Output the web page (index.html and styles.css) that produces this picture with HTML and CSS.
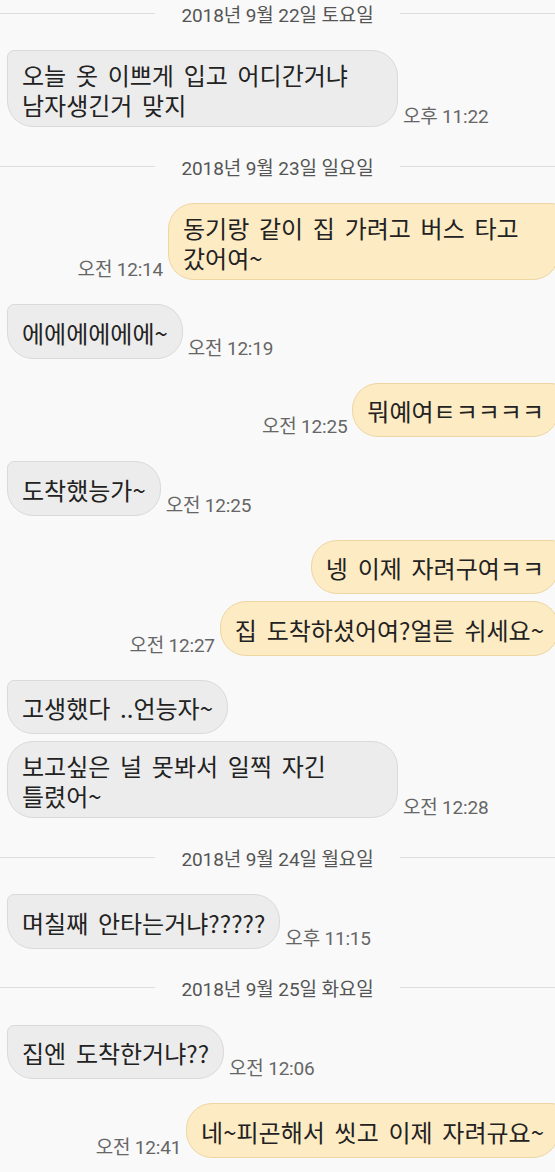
FILE: index.html
```html
<!DOCTYPE html>
<html lang="ko">
  <head>
    <meta charset="UTF-8" />
    <meta name="viewport" content="width=device-width, initial-scale=1.0" />
    <title>메시지</title>
    <link rel="stylesheet" href="styles.css">
  </head>
  <body>
    <div class="chat">
      <div class="day"><span>2018년 9월 22일 토요일</span></div>

      <div class="row in">
        <div class="bubble">오늘 옷 이쁘게 입고 어디간거냐 남자생긴거 맞지</div>
        <span class="time">오후 11:22</span>
      </div>

      <div class="day"><span>2018년 9월 23일 일요일</span></div>

      <div class="row out">
        <span class="time">오전 12:14</span>
        <div class="bubble">동기랑 같이 집 가려고 버스 타고 갔어여~</div>
      </div>

      <div class="row in">
        <div class="bubble">에에에에에에~</div>
        <span class="time">오전 12:19</span>
      </div>

      <div class="row out">
        <span class="time">오전 12:25</span>
        <div class="bubble">뭐예여ㅌㅋㅋㅋㅋ</div>
      </div>

      <div class="row in">
        <div class="bubble">도착했능가~</div>
        <span class="time">오전 12:25</span>
      </div>

      <div class="row out">
        <div class="bubble">넹 이제 자려구여ㅋㅋ</div>
      </div>
      <div class="row out cont">
        <span class="time">오전 12:27</span>
        <div class="bubble">집 도착하셨어여?얼른 쉬세요~</div>
      </div>

      <div class="row in">
        <div class="bubble">고생했다 ..언능자~</div>
      </div>
      <div class="row in cont">
        <div class="bubble">보고싶은 널 못봐서 일찍 자긴 틀렸어~</div>
        <span class="time">오전 12:28</span>
      </div>

      <div class="day"><span>2018년 9월 24일 월요일</span></div>

      <div class="row in">
        <div class="bubble">며칠째 안타는거냐?????</div>
        <span class="time">오후 11:15</span>
      </div>

      <div class="day"><span>2018년 9월 25일 화요일</span></div>

      <div class="row in">
        <div class="bubble">집엔 도착한거냐??</div>
        <span class="time">오전 12:06</span>
      </div>

      <div class="row out">
        <span class="time">오전 12:41</span>
        <div class="bubble">네~피곤해서 씻고 이제 자려규요~</div>
      </div>
    </div>
  </body>
</html>
```

FILE: styles.css
```css
body {
  margin: 0;
  padding: 0;
  background: #f9f9f9;
  font-family: "Noto Sans CJK KR", "Noto Sans", sans-serif;
  color: #222;
  overflow: hidden;
}

.chat {
  display: flex;
  flex-direction: column;
  gap: 24px;
  padding: 0 0 0 7px;
}

/* date separator */
.day {
  height: 26px;
  margin: 2px 0 0 -7px;
  display: flex;
  align-items: center;
  gap: 26px;
  font-family: "Roboto", "Noto Sans CJK KR", sans-serif;
  font-size: 19px;
  color: #555;
  letter-spacing: -0.1px;
}

.day:first-child {
  margin-top: 0;
}

.day::before,
.day::after {
  content: "";
  flex: 1;
  height: 1px;
  background: #dedede;
}

.row {
  display: flex;
  align-items: flex-end;
  gap: 5px;
}

.row.out {
  justify-content: flex-end;
}

.row.cont {
  margin-top: -17px;
}

.bubble {
  box-sizing: border-box;
  max-width: 391px;
  min-height: 54.5px;
  display: flex;
  align-items: center;
  padding: 9px 14px 6px;
  font-size: 24px;
  line-height: 30px;
  word-spacing: 3px;
  word-break: keep-all;
  border: 1px solid;
}

.in .bubble {
  background: #ececec;
  border-color: #dadada;
  border-radius: 7px 26px 26px 26px;
}

.in.cont .bubble {
  border-radius: 26px;
}

.out .bubble {
  background: #fdebc4;
  border-color: #eed6a2;
  border-radius: 26px 7px 26px 26px;
  margin-right: -4px;
}

.out.cont .bubble {
  border-radius: 26px;
}

.time {
  flex-shrink: 0;
  font-family: "Roboto", "Noto Sans CJK KR", sans-serif;
  font-size: 19px;
  line-height: 20px;
  color: #666;
  letter-spacing: -0.2px;
}
```
